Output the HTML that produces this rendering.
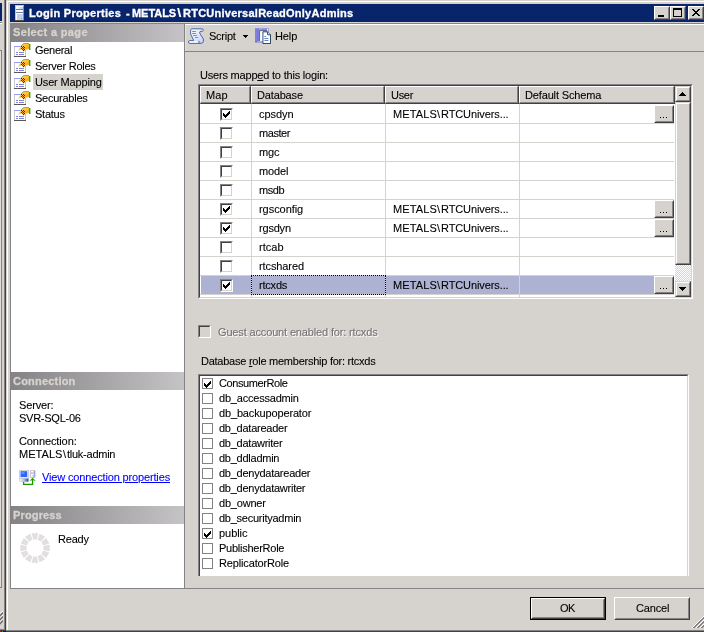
<!DOCTYPE html>
<html>
<head>
<meta charset="utf-8">
<title>Login Properties</title>
<style>
html,body{margin:0;padding:0;}
html{background:#d6d3ce;overflow:hidden;}
body{width:704px;height:632px;overflow:hidden;position:relative;background:#d6d3ce;
 font-family:"Liberation Sans",sans-serif;font-size:11px;line-height:13px;color:#000;}
.a{position:absolute;}
.t{position:absolute;white-space:nowrap;line-height:13px;height:13px;will-change:transform;-webkit-text-stroke:0.1px currentColor;}
.b{font-weight:bold;-webkit-text-stroke:0.3px currentColor;}
.hdr{position:absolute;left:10px;width:174px;height:18px;background:linear-gradient(to right,#848284,#c6c3c6);}
.hdr span{position:absolute;left:4px;top:2px;color:#d8d4cc;font-weight:bold;white-space:nowrap;}
/* 3d checkbox */
.cb{position:absolute;width:9px;height:9px;background:#fff;border-style:solid;border-width:2px;
 border-color:#848284 #fff #fff #848284;}
.cb:before{content:"";position:absolute;left:-1px;top:-1px;width:9px;height:9px;border-style:solid;border-width:1px;border-color:#424142 #d6d3ce #d6d3ce #424142;}
.fcb{position:absolute;width:9px;height:9px;background:#fff;border:1px solid #848284;}
.ck{position:absolute;left:1px;top:1px;width:7px;height:7px;}
.btn{position:absolute;background:#d6d3ce;box-sizing:border-box;border-style:solid;border-width:1px;border-color:#fff #424142 #424142 #fff;}
.btn:before{content:"";position:absolute;left:0;top:0;right:0;bottom:0;border-style:solid;border-width:1px;border-color:#d6d3ce #848284 #848284 #d6d3ce;}
.hc{position:absolute;top:86px;height:18px;background:#d6d3ce;box-sizing:border-box;border-style:solid;border-width:1px 2px 2px 1px;border-color:#fff #424142 #424142 #fff;}
.hc:before{content:"";position:absolute;left:0;top:0;right:-1px;bottom:-1px;border-style:solid;border-width:0 1px 1px 0;border-color:#848284;}
.hc span{position:absolute;top:3px;white-space:nowrap;}
.gl{position:absolute;background:#d6d3ce;}
.sb{position:absolute;background:#d6d3ce;box-sizing:border-box;border-style:solid;border-width:1px;border-color:#d6d3ce #424142 #424142 #d6d3ce;}
.sb:before{content:"";position:absolute;left:0;top:0;right:0;bottom:0;border-style:solid;border-width:1px;border-color:#fff #848284 #848284 #fff;}
</style>
</head>
<body>
<!-- neighbouring window sliver on the left -->
<div class="a" style="left:0;top:3px;width:2px;height:18px;background:#08246b"></div>
<div class="a" style="left:0;top:22px;width:2px;height:1px;background:#848284"></div>
<div class="a" style="left:0;top:23px;width:2px;height:1px;background:#fff"></div>
<div class="a" style="left:0;top:50px;width:2px;height:538px;box-sizing:border-box;border:1px solid #848284;border-left:0;background:#e2dfdb"></div>
<div class="a" style="left:4px;top:0;width:1px;height:630px;background:#848284"></div>
<div class="a" style="left:5px;top:0;width:1px;height:631px;background:#424142"></div>
<div class="a" style="left:0;top:629px;width:5px;height:1px;background:#848284"></div>
<div class="a" style="left:0;top:630px;width:6px;height:1px;background:#424142"></div>
<div class="a" style="left:0;top:631px;width:6px;height:1px;background:#181818"></div>
<div class="a" style="left:0;top:631px;width:1px;height:1px;background:#f00;box-shadow:2px 0 #0c0,4px 0 #00f"></div>
<svg class="a" style="left:0;top:611px" width="3" height="14" viewBox="0 0 3 14"><g stroke-width="1.2" fill="none"><path d="M-1 4.2 L3 0.2 M-1 8.2 L3 4.2 M-1 12.2 L3 8.2" stroke="#fff"/><path d="M-1 5.6 L3 1.6 M-1 9.6 L3 5.6 M-1 13.6 L3 9.6" stroke="#707070" stroke-width="1.6"/></g></svg>

<!-- window frame -->
<div class="a" style="left:7px;top:1px;width:1px;height:629px;background:#fff"></div>
<div class="a" style="left:7px;top:1px;width:697px;height:1px;background:#fff"></div>
<div class="a" style="left:6px;top:630px;width:698px;height:1px;background:#848284"></div>
<div class="a" style="left:6px;top:631px;width:698px;height:1px;background:#424142"></div>

<!-- title bar -->
<div class="a" style="left:10px;top:4px;width:694px;height:18px;background:#08246b"></div>

<!-- client top line -->
<div class="a" style="left:10px;top:23px;width:694px;height:1px;background:#848284"></div>
<div class="a" style="left:185px;top:24px;width:519px;height:1px;background:#fff"></div>
<div class="a" style="left:185px;top:25px;width:1px;height:26px;background:#e6e3df"></div>

<!-- left panel -->
<div class="a" style="left:10px;top:24px;width:174px;height:564px;background:#fff;box-sizing:border-box;border-left:1px solid #848284"></div>
<div class="a" style="left:184px;top:23px;width:1px;height:566px;background:#848284"></div>
<div class="hdr" style="top:24px"></div>
<div class="a" style="left:33px;top:74px;width:70px;height:16px;background:#d6d3ce"></div>

<div class="hdr" style="top:372px"></div>

<div class="hdr" style="top:506px"></div>

<!-- bottom separator -->
<div class="a" style="left:10px;top:588px;width:694px;height:1px;background:#848284"></div>

<!-- toolbar -->
<svg class="a" style="left:243px;top:35px" width="5" height="3" shape-rendering="crispEdges" fill="#000"><rect x="0" y="0" width="5" height="1"/><rect x="1" y="1" width="3" height="1"/><rect x="2" y="2" width="1" height="1"/></svg>
<div class="a" style="left:185px;top:51px;width:519px;height:1px;background:#848284"></div>

<!-- users grid -->
<div class="a" style="left:198px;top:84px;width:495px;height:215px;box-sizing:border-box;background:#fff;border-style:solid;border-width:1px;border-color:#848284 #fff #fff #848284"></div>
<div class="a" style="left:199px;top:85px;width:493px;height:213px;box-sizing:border-box;border-style:solid;border-width:1px;border-color:#424142 #d6d3ce #d6d3ce #424142"></div>

<div class="hc" style="left:200px;width:51px"></div>
<div class="hc" style="left:251px;width:134px"></div>
<div class="hc" style="left:385px;width:134px"></div>
<div class="hc" style="left:519px;width:156px"></div>

<!-- selected row -->
<div class="a" style="left:201px;top:276px;width:473px;height:18px;background:#adb2d3"></div>
<!-- grid lines -->
<div class="gl" style="left:200px;top:123px;width:474px;height:1px"></div>
<div class="cb" style="left:220px;top:108px"></div>
<svg class="a" style="left:223px;top:111px" width="7" height="7" shape-rendering="crispEdges" fill="#000"><rect x="0" y="2" width="1" height="3"/><rect x="1" y="3" width="1" height="3"/><rect x="2" y="4" width="1" height="3"/><rect x="3" y="3" width="1" height="3"/><rect x="4" y="2" width="1" height="3"/><rect x="5" y="1" width="1" height="3"/><rect x="6" y="0" width="1" height="3"/></svg>
<div class="btn" style="left:654px;top:105px;width:20px;height:18px"></div>
<div class="a" style="left:660px;top:117px;width:1px;height:1px;background:#000;box-shadow:3px 0 #000,6px 0 #000"></div>
<div class="gl" style="left:200px;top:142px;width:474px;height:1px"></div>
<div class="cb" style="left:220px;top:127px"></div>
<div class="gl" style="left:200px;top:161px;width:474px;height:1px"></div>
<div class="cb" style="left:220px;top:146px"></div>
<div class="gl" style="left:200px;top:180px;width:474px;height:1px"></div>
<div class="cb" style="left:220px;top:165px"></div>
<div class="gl" style="left:200px;top:199px;width:474px;height:1px"></div>
<div class="cb" style="left:220px;top:184px"></div>
<div class="gl" style="left:200px;top:218px;width:474px;height:1px"></div>
<div class="cb" style="left:220px;top:203px"></div>
<svg class="a" style="left:223px;top:206px" width="7" height="7" shape-rendering="crispEdges" fill="#000"><rect x="0" y="2" width="1" height="3"/><rect x="1" y="3" width="1" height="3"/><rect x="2" y="4" width="1" height="3"/><rect x="3" y="3" width="1" height="3"/><rect x="4" y="2" width="1" height="3"/><rect x="5" y="1" width="1" height="3"/><rect x="6" y="0" width="1" height="3"/></svg>
<div class="btn" style="left:654px;top:200px;width:20px;height:18px"></div>
<div class="a" style="left:660px;top:212px;width:1px;height:1px;background:#000;box-shadow:3px 0 #000,6px 0 #000"></div>
<div class="gl" style="left:200px;top:237px;width:474px;height:1px"></div>
<div class="cb" style="left:220px;top:222px"></div>
<svg class="a" style="left:223px;top:225px" width="7" height="7" shape-rendering="crispEdges" fill="#000"><rect x="0" y="2" width="1" height="3"/><rect x="1" y="3" width="1" height="3"/><rect x="2" y="4" width="1" height="3"/><rect x="3" y="3" width="1" height="3"/><rect x="4" y="2" width="1" height="3"/><rect x="5" y="1" width="1" height="3"/><rect x="6" y="0" width="1" height="3"/></svg>
<div class="btn" style="left:654px;top:219px;width:20px;height:18px"></div>
<div class="a" style="left:660px;top:231px;width:1px;height:1px;background:#000;box-shadow:3px 0 #000,6px 0 #000"></div>
<div class="gl" style="left:200px;top:256px;width:474px;height:1px"></div>
<div class="cb" style="left:220px;top:241px"></div>
<div class="gl" style="left:200px;top:275px;width:474px;height:1px"></div>
<div class="cb" style="left:220px;top:260px"></div>
<div class="gl" style="left:200px;top:294px;width:474px;height:1px"></div>
<div class="cb" style="left:220px;top:279px"></div>
<svg class="a" style="left:223px;top:282px" width="7" height="7" shape-rendering="crispEdges" fill="#000"><rect x="0" y="2" width="1" height="3"/><rect x="1" y="3" width="1" height="3"/><rect x="2" y="4" width="1" height="3"/><rect x="3" y="3" width="1" height="3"/><rect x="4" y="2" width="1" height="3"/><rect x="5" y="1" width="1" height="3"/><rect x="6" y="0" width="1" height="3"/></svg>
<div class="btn" style="left:654px;top:276px;width:20px;height:18px"></div>
<div class="a" style="left:660px;top:288px;width:1px;height:1px;background:#000;box-shadow:3px 0 #000,6px 0 #000"></div>
<div class="gl" style="left:251px;top:104px;width:1px;height:193px"></div>
<div class="gl" style="left:385px;top:104px;width:1px;height:193px"></div>
<div class="gl" style="left:519px;top:104px;width:1px;height:193px"></div>

<!-- guest -->
<div class="a" style="left:198px;top:325px;width:13px;height:13px;box-sizing:border-box;background:#d6d3ce;border-style:solid;border-width:1px;border-color:#848284 #fff #fff #848284"></div>
<div class="a" style="left:199px;top:326px;width:11px;height:11px;box-sizing:border-box;border-style:solid;border-width:1px;border-color:#424142 #d6d3ce #d6d3ce #424142"></div>

<!-- roles -->
<div class="a" style="left:198px;top:374px;width:491px;height:202px;box-sizing:border-box;background:#fff;border-style:solid;border-width:1px 1px 0 1px;border-color:#848284 #fff #fff #848284"></div>
<div class="a" style="left:199px;top:375px;width:489px;height:201px;box-sizing:border-box;border-style:solid;border-width:1px 1px 0 1px;border-color:#424142 #d6d3ce #d6d3ce #424142"></div>
<div class="fcb" style="left:202px;top:378px"></div>
<svg class="a" style="left:204px;top:381px" width="7" height="7" shape-rendering="crispEdges" fill="#000"><rect x="0" y="2" width="1" height="3"/><rect x="1" y="3" width="1" height="3"/><rect x="2" y="4" width="1" height="3"/><rect x="3" y="3" width="1" height="3"/><rect x="4" y="2" width="1" height="3"/><rect x="5" y="1" width="1" height="3"/><rect x="6" y="0" width="1" height="3"/></svg>
<div class="fcb" style="left:202px;top:393px"></div>
<div class="fcb" style="left:202px;top:408px"></div>
<div class="fcb" style="left:202px;top:423px"></div>
<div class="fcb" style="left:202px;top:438px"></div>
<div class="fcb" style="left:202px;top:453px"></div>
<div class="fcb" style="left:202px;top:468px"></div>
<div class="fcb" style="left:202px;top:483px"></div>
<div class="fcb" style="left:202px;top:498px"></div>
<div class="fcb" style="left:202px;top:513px"></div>
<div class="fcb" style="left:202px;top:528px"></div>
<svg class="a" style="left:204px;top:531px" width="7" height="7" shape-rendering="crispEdges" fill="#000"><rect x="0" y="2" width="1" height="3"/><rect x="1" y="3" width="1" height="3"/><rect x="2" y="4" width="1" height="3"/><rect x="3" y="3" width="1" height="3"/><rect x="4" y="2" width="1" height="3"/><rect x="5" y="1" width="1" height="3"/><rect x="6" y="0" width="1" height="3"/></svg>
<div class="fcb" style="left:202px;top:543px"></div>
<div class="fcb" style="left:202px;top:558px"></div>

<!-- buttons -->
<div class="a" style="left:530px;top:597px;width:76px;height:23px;background:#000"></div>
<div class="btn" style="left:531px;top:598px;width:74px;height:21px"></div>
<div class="btn" style="left:614px;top:597px;width:76px;height:23px"></div>

<!-- title icon -->
<svg class="a" style="left:15px;top:5px" width="9" height="16" viewBox="0 0 9 16" shape-rendering="crispEdges">
<defs><linearGradient id="tg" x1="0" x2="1" y1="0" y2="0"><stop offset="0" stop-color="#fff"/><stop offset="1" stop-color="#b8c2ee"/></linearGradient></defs>
<rect x="0" y="0" width="9" height="16" fill="#c4c4cc"/>
<rect x="1" y="1" width="7" height="14" fill="#fff"/>
<rect x="2" y="2" width="6" height="2" fill="url(#tg)"/>
<rect x="1" y="4" width="7" height="1" fill="#70809c"/>
<rect x="1" y="7" width="7" height="1" fill="#70809c"/>
<rect x="2" y="9" width="6" height="6" fill="#c6cef2"/>
<rect x="8" y="1" width="1" height="15" fill="#8c8c94"/>
<rect x="0" y="15" width="9" height="1" fill="#50504c"/>
<rect x="6" y="13" width="1" height="1" fill="#40d400"/>
</svg>
<!-- title buttons -->
<div class="btn" style="left:654px;top:6px;width:16px;height:14px"></div>
<div class="a" style="left:658px;top:15px;width:6px;height:2px;background:#000"></div>
<div class="btn" style="left:670px;top:6px;width:16px;height:14px"></div>
<div class="a" style="left:673px;top:8px;width:9px;height:9px;box-sizing:border-box;border:1px solid #000;border-top-width:2px"></div>
<div class="btn" style="left:688px;top:6px;width:16px;height:14px"></div>
<svg class="a" style="left:692px;top:9px" width="8" height="7" viewBox="0 0 8 7" shape-rendering="crispEdges" fill="#000">
<rect x="0" y="0" width="2" height="1"/><rect x="6" y="0" width="2" height="1"/>
<rect x="1" y="1" width="2" height="1"/><rect x="5" y="1" width="2" height="1"/>
<rect x="2" y="2" width="4" height="1"/>
<rect x="3" y="3" width="2" height="1"/>
<rect x="2" y="4" width="4" height="1"/>
<rect x="1" y="5" width="2" height="1"/><rect x="5" y="5" width="2" height="1"/>
<rect x="0" y="6" width="2" height="1"/><rect x="6" y="6" width="2" height="1"/>
</svg>
<!-- page icon symbol -->
<svg width="0" height="0" style="position:absolute">
<defs>
<linearGradient id="hg" x1="0" x2="1" y1="0" y2="1"><stop offset="0" stop-color="#ffe870"/><stop offset="0.6" stop-color="#ffb820"/><stop offset="1" stop-color="#e08800"/></linearGradient>
<symbol id="pg" viewBox="0 0 17 14">
<rect x="0" y="3" width="12" height="11" fill="#fff"/>
<rect x="0" y="3" width="12" height="1" fill="#9c9cff"/>
<rect x="0" y="4" width="1" height="9" fill="#c8c8d0"/>
<rect x="11" y="7" width="1" height="6" fill="#b0c0ff"/>
<rect x="0" y="13" width="12" height="1" fill="#585858"/>
<rect x="2" y="9" width="2" height="1" fill="#8484dc"/><rect x="5" y="9" width="5" height="1" fill="#8484dc"/>
<rect x="2" y="11" width="2" height="1" fill="#8484dc"/><rect x="5" y="11" width="5" height="1" fill="#8484dc"/>
<path d="M4.5 6.5 L7 3 L9 1 L11 0.5 H15 V5.5 L13 6.5 L11 6.5 L10.5 8 L9.5 8.5 L7.5 6 L5.5 7.5Z" fill="url(#hg)"/>
<path d="M7 3 L9 1 L11 0.5 H15" stroke="#908868" stroke-width="0.8" fill="none"/>
<g fill="#303030"><rect x="7" y="3" width="1" height="1"/><rect x="9" y="3" width="1" height="1"/><rect x="8" y="4" width="1" height="1"/><rect x="10" y="4" width="1" height="1"/><rect x="7" y="5" width="1" height="1"/><rect x="9" y="5" width="1" height="1"/><rect x="8" y="6" width="1" height="1"/><rect x="10" y="6" width="1" height="1"/><rect x="9" y="7" width="1" height="1"/></g>
<rect x="15" y="1" width="1.4" height="6" fill="#28a428"/>
</symbol>
</defs>
</svg>
<svg class="a" style="left:14px;top:43px" width="17" height="14"><use href="#pg"/></svg>
<svg class="a" style="left:14px;top:59px" width="17" height="14"><use href="#pg"/></svg>
<svg class="a" style="left:14px;top:75px" width="17" height="14"><use href="#pg"/></svg>
<svg class="a" style="left:14px;top:91px" width="17" height="14"><use href="#pg"/></svg>
<svg class="a" style="left:14px;top:107px" width="17" height="14"><use href="#pg"/></svg>
<!-- script icon -->
<svg class="a" style="left:188px;top:28px" width="16" height="16" viewBox="0 0 16 16">
<defs><linearGradient id="sg" x1="0" x2="1" y1="0" y2="1"><stop offset="0" stop-color="#fff"/><stop offset="1" stop-color="#c4d2fa"/></linearGradient></defs>
<path d="M3.5 0.8 H13 Q15.6 0.6 15.4 2.4 Q15.2 3.6 12.2 3.4 L11.6 5 L15.4 11 V13.8 Q15 15.4 12 15.4 H2 Q0.5 15.4 0.5 14 Q0.5 12.6 2 12.6 H5.6 L5 11 L2.6 6 Q2.2 1.2 3.5 0.8Z" fill="url(#sg)" stroke="#34548c" stroke-width="0.85"/>
<path d="M1.5 14 H10.5" stroke="#fff" stroke-width="1.2"/>
<path d="M11 12.8 V15" stroke="#2c4c80" stroke-width="0.8"/>
<path d="M4 3.5 H8 M4 5.5 H8 M5 7.5 H9 M7 9.5 H10" stroke="#6c94e4" stroke-width="1"/>
</svg>
<!-- help icon -->
<svg class="a" style="left:255px;top:28px" width="16" height="16" viewBox="0 0 16 16">
<defs><linearGradient id="bg1" x1="0" x2="1" y1="0" y2="0"><stop offset="0" stop-color="#6a68c8"/><stop offset="0.12" stop-color="#8a88e4"/><stop offset="0.2" stop-color="#6c6acc"/><stop offset="0.3" stop-color="#9a98f0"/><stop offset="1" stop-color="#7e7cdc"/></linearGradient></defs>
<rect x="0.2" y="0.2" width="13.6" height="14" fill="url(#bg1)"/>
<rect x="0.2" y="13.4" width="13.6" height="0.9" fill="#5a58b4"/>
<rect x="12" y="0.7" width="1.2" height="4.6" fill="#fff"/>
<rect x="4.6" y="2.6" width="8" height="10.8" fill="#fff"/>
<path d="M4.6 13.4 V2.6 H12.4" fill="none" stroke="#486078" stroke-width="0.9"/>
<path d="M2 13.7 H5" stroke="#c8d0f8" stroke-width="0.7"/>
<path d="M7.9 3.8 H12.6 L15.6 6.8 V15.6 H7.9Z" fill="#fff" stroke="#1c3858" stroke-width="1"/>
<path d="M7.9 15.2 V3.8" stroke="#fff" stroke-width="0.5" opacity="0.45"/>
<path d="M12.6 3.8 V6.8 H15.6" fill="#dfe8ff" stroke="#1c3858" stroke-width="0.9"/>
<path d="M9.4 8.5 H11.2 M9.4 10.5 H13.4 M9.4 12.5 H13.4" stroke="#6484c8" stroke-width="1"/>
</svg>
<!-- connection icon -->
<svg class="a" style="left:19px;top:470px" width="17" height="16" viewBox="0 0 17 16">
<defs><linearGradient id="bs" x1="0" x2="1" y1="0" y2="0"><stop offset="0" stop-color="#fff"/><stop offset="0.5" stop-color="#b8bce0"/><stop offset="1" stop-color="#30308c"/></linearGradient></defs>
<rect x="0.5" y="0.3" width="9.2" height="8" fill="#ececf6" stroke="#c0c0d0" stroke-width="0.7"/>
<rect x="1.6" y="1.2" width="6.6" height="5.8" fill="#2868ff"/>
<rect x="2.4" y="2" width="3" height="2" fill="#5c94ff"/>
<rect x="0.6" y="8.6" width="9" height="3.1" rx="0.8" fill="url(#bs)" stroke="#b0b0c4" stroke-width="0.5"/>
<rect x="11.4" y="0.3" width="4.6" height="7.2" rx="0.6" fill="#fbfbff" stroke="#a4a4c0" stroke-width="0.7"/>
<rect x="14.8" y="0.8" width="0.9" height="6.4" fill="#8c8cc8"/>
<rect x="12" y="2.6" width="2.6" height="0.8" fill="#9090b0"/>
<rect x="13.6" y="5.4" width="1" height="1" fill="#30c020"/>
<path d="M4.6 12 V14.4 H13.6 V9" stroke="#1c9800" stroke-width="1.3" fill="none"/>
<path d="M10.8 10.8 L13.6 7.8 L16.4 10.8 L15.2 10.8 L13.6 9.6 L12 10.8Z" fill="#1c9800"/>
</svg>
<!-- progress spinner -->
<svg class="a" style="left:20px;top:533px" width="30" height="30" viewBox="-15 -15 30 30">
<g fill="#e2dee2">
<path id="sp" d="M-3.2 -14.7 L3.2 -14.7 L1.9 -8.5 L-1.9 -8.5Z"/>
<use href="#sp" transform="rotate(30)"/><use href="#sp" transform="rotate(60)"/><use href="#sp" transform="rotate(90)"/>
<use href="#sp" transform="rotate(120)"/><use href="#sp" transform="rotate(150)"/><use href="#sp" transform="rotate(180)"/>
<use href="#sp" transform="rotate(210)"/><use href="#sp" transform="rotate(240)"/><use href="#sp" transform="rotate(270)"/>
<use href="#sp" transform="rotate(300)"/><use href="#sp" transform="rotate(330)"/>
</g>
</svg>
<!-- scrollbar -->
<div class="a" style="left:675px;top:86px;width:16px;height:211px;background:#eae8e4;background-image:conic-gradient(#fff 25%,#d6d3ce 0 50%,#fff 0 75%,#d6d3ce 0);background-size:2px 2px"></div>
<div class="sb" style="left:675px;top:86px;width:16px;height:16px"></div>
<div class="sb" style="left:675px;top:102px;width:16px;height:163px"></div>
<div class="sb" style="left:675px;top:281px;width:16px;height:16px"></div>
<svg class="a" style="left:679px;top:92px" width="7" height="4" shape-rendering="crispEdges" fill="#000"><rect x="3" y="0" width="1" height="1"/><rect x="2" y="1" width="3" height="1"/><rect x="1" y="2" width="5" height="1"/><rect x="0" y="3" width="7" height="1"/></svg>
<svg class="a" style="left:679px;top:287px" width="7" height="4" shape-rendering="crispEdges" fill="#000"><rect x="0" y="0" width="7" height="1"/><rect x="1" y="1" width="5" height="1"/><rect x="2" y="2" width="3" height="1"/><rect x="3" y="3" width="1" height="1"/></svg>
<!-- focus rect on selected database cell -->
<div class="a" style="left:251px;top:275px;width:135px;height:20px;box-sizing:border-box;border:1px dotted #000"></div>
<!-- size grip -->
<svg class="a" style="left:691px;top:615px" width="13" height="13" viewBox="0 0 13 13" shape-rendering="crispEdges">
<g stroke-width="1.4" fill="none">
<path d="M1 13 L13 1" stroke="#fff"/><path d="M2 13 L13 2 M3 13 L13 3" stroke="#848284"/>
<path d="M5 13 L13 5" stroke="#fff"/><path d="M6 13 L13 6 M7 13 L13 7" stroke="#848284"/>
<path d="M9 13 L13 9" stroke="#fff"/><path d="M10 13 L13 10 M11 13 L13 11" stroke="#848284"/>
</g>
</svg>

<div class="t b" style="left:29px;top:7px;color:#fff;"><span style="display:inline-block;white-space:pre;width:97px;letter-spacing:0.3px;">Login Properties </span><span style="display:inline-block;white-space:pre;width:6px;">- </span><span style="display:inline-block;width:46px;letter-spacing:-0.05px;">METALS</span><span style="display:inline-block;width:5px;transform:scale(1.45,1.22);transform-origin:50% 70%;-webkit-text-stroke:0;">\</span><span style="display:inline-block;letter-spacing:0.25px;">RTCUniversalReadOnlyAdmins</span></div>
<div class="t b" style="left:13px;top:26px;color:#d6d3ce;letter-spacing:0.35px;">Select a page</div>
<div class="t b" style="left:13px;top:375px;color:#d6d3ce;letter-spacing:0.2px;">Connection</div>
<div class="t b" style="left:13px;top:509px;color:#d6d3ce;letter-spacing:0.15px;">Progress</div>
<div class="t" style="left:35px;top:44px;letter-spacing:-0.3px;">General</div>
<div class="t" style="left:35px;top:60px;letter-spacing:-0.25px;">Server Roles</div>
<div class="t" style="left:35px;top:76px;letter-spacing:-0.15px;">User Mapping</div>
<div class="t" style="left:35px;top:92px;letter-spacing:-0.25px;">Securables</div>
<div class="t" style="left:35px;top:108px;letter-spacing:-0.25px;">Status</div>
<div class="t" style="left:19px;top:399px;letter-spacing:-0.15px;">Server:</div>
<div class="t" style="left:19px;top:412px;letter-spacing:-0.25px;">SVR-SQL-06</div>
<div class="t" style="left:19px;top:435px;letter-spacing:-0.1px;">Connection:</div>
<div class="t" style="left:19px;top:448px;"><span style="display:inline-block;width:44px;letter-spacing:0.05px;">METALS</span><span style="display:inline-block;width:4px;">\</span><span style="display:inline-block;letter-spacing:-0.25px;">tluk-admin</span></div>
<div class="t" style="left:42px;top:471px;color:#0000ff;letter-spacing:-0.15px;text-decoration:underline;">View connection properties</div>
<div class="t" style="left:58px;top:533px;letter-spacing:-0.2px;">Ready</div>
<div class="t" style="left:209px;top:30px;letter-spacing:-0.25px;">Script</div>
<div class="t" style="left:275px;top:30px;letter-spacing:-0.1px;">Help</div>
<div class="t" style="left:200px;top:69px;letter-spacing:-0.2px;">Users mapp<u>e</u>d to this login:</div>
<div class="t" style="left:206px;top:89px;letter-spacing:0.1px;">Map</div>
<div class="t" style="left:257px;top:89px;letter-spacing:-0.15px;">Database</div>
<div class="t" style="left:391px;top:89px;letter-spacing:-0.3px;">User</div>
<div class="t" style="left:525px;top:89px;letter-spacing:-0.15px;">Default Schema</div>
<div class="t" style="left:259px;top:108px;letter-spacing:-0.05px;">cpsdyn</div>
<div class="t" style="left:259px;top:127px;letter-spacing:-0.45px;">master</div>
<div class="t" style="left:259px;top:146px;letter-spacing:-0.1px;">mgc</div>
<div class="t" style="left:259px;top:165px;letter-spacing:-0.15px;">model</div>
<div class="t" style="left:259px;top:184px;letter-spacing:-0.45px;">msdb</div>
<div class="t" style="left:259px;top:203px;letter-spacing:-0.05px;">rgsconfig</div>
<div class="t" style="left:259px;top:222px;letter-spacing:-0.2px;">rgsdyn</div>
<div class="t" style="left:259px;top:241px;letter-spacing:0.05px;">rtcab</div>
<div class="t" style="left:259px;top:260px;letter-spacing:-0.1px;">rtcshared</div>
<div class="t" style="left:259px;top:279px;letter-spacing:-0.2px;">rtcxds</div>
<div class="t" style="left:393px;top:108px;"><span style="display:inline-block;width:44px;letter-spacing:0.15px;">METALS</span><span style="display:inline-block;width:4px;">\</span><span style="display:inline-block;letter-spacing:-0.1px;">RTCUnivers...</span></div>
<div class="t" style="left:393px;top:203px;"><span style="display:inline-block;width:44px;letter-spacing:0.15px;">METALS</span><span style="display:inline-block;width:4px;">\</span><span style="display:inline-block;letter-spacing:-0.1px;">RTCUnivers...</span></div>
<div class="t" style="left:393px;top:222px;"><span style="display:inline-block;width:44px;letter-spacing:0.15px;">METALS</span><span style="display:inline-block;width:4px;">\</span><span style="display:inline-block;letter-spacing:-0.1px;">RTCUnivers...</span></div>
<div class="t" style="left:393px;top:279px;"><span style="display:inline-block;width:44px;letter-spacing:0.15px;">METALS</span><span style="display:inline-block;width:4px;">\</span><span style="display:inline-block;letter-spacing:-0.1px;">RTCUnivers...</span></div>
<div class="t" style="left:218px;top:326px;color:#747274;letter-spacing:-0.15px;text-shadow:1px 1px 0 #fff;">Guest account enabled for: rtcxds</div>
<div class="t" style="left:201px;top:355px;letter-spacing:-0.25px;">Database <u>r</u>ole membership for: rtcxds</div>
<div class="t" style="left:219px;top:377px;letter-spacing:-0.4px;">ConsumerRole</div>
<div class="t" style="left:219px;top:392px;letter-spacing:-0.2px;">db_accessadmin</div>
<div class="t" style="left:219px;top:407px;letter-spacing:-0.15px;">db_backupoperator</div>
<div class="t" style="left:219px;top:422px;letter-spacing:-0.25px;">db_datareader</div>
<div class="t" style="left:219px;top:437px;letter-spacing:-0.25px;">db_datawriter</div>
<div class="t" style="left:219px;top:452px;letter-spacing:-0.25px;">db_ddladmin</div>
<div class="t" style="left:219px;top:467px;letter-spacing:-0.25px;">db_denydatareader</div>
<div class="t" style="left:219px;top:482px;letter-spacing:-0.25px;">db_denydatawriter</div>
<div class="t" style="left:219px;top:497px;letter-spacing:-0.2px;">db_owner</div>
<div class="t" style="left:219px;top:512px;letter-spacing:-0.25px;">db_securityadmin</div>
<div class="t" style="left:219px;top:527px;letter-spacing:-0.05px;">public</div>
<div class="t" style="left:219px;top:542px;letter-spacing:-0.25px;">PublisherRole</div>
<div class="t" style="left:219px;top:557px;letter-spacing:-0.15px;">ReplicatorRole</div>
<div class="t" style="left:560px;top:602px;letter-spacing:-0.45px;">OK</div>
<div class="t" style="left:636px;top:602px;letter-spacing:-0.15px;">Cancel</div>
</body>
</html>
